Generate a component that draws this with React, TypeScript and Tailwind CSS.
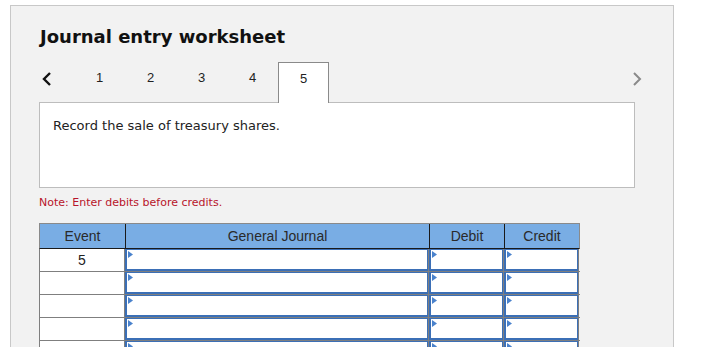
import React from "react";

const BLUE = "border-[#3b6fb6]";

function Tri() {
  return (
    <svg className="absolute left-[1px] top-[1px]" width="5" height="7" viewBox="0 0 5 7">
      <polygon points="0,0 5,3.5 0,7" fill="#4a82cc" />
    </svg>
  );
}

function InputCell({ w }: { w: string }) {
  return (
    <div className={`${w} h-full border-r border-[#7f7f7f] shrink-0`}>
      <div className={`relative h-[22px] border-t border-l-2 border-r border-b-2 ${BLUE} bg-white`}>
        <Tri />
      </div>
    </div>
  );
}

function Row({ ev }: { ev?: string }) {
  return (
    <div className="flex h-[23px] border-b border-[#7f7f7f]">
      <div className="w-[86px] shrink-0 border-l border-r border-[#7f7f7f] bg-white flex items-center justify-center text-[14px] text-[#222] font-['Liberation_Sans',Arial,sans-serif]">
        {ev}
      </div>
      <InputCell w="w-[304px]" />
      <InputCell w="w-[75px]" />
      <InputCell w="w-[75px]" />
    </div>
  );
}

export default function App() {
  const tabs = ["1", "2", "3", "4", "5"];
  return (
    <div className="w-[702px] h-[347px] overflow-hidden bg-white">
      <div className="ml-[10px] mt-[5px] w-[664px] h-[400px] border border-[#c8c8c8] bg-[#f2f2f2] pl-[28px] pt-[20px]">
        <div className="font-['DejaVu_Sans',Verdana,sans-serif] font-bold text-[18px] leading-[22px] text-[#111] pl-[1px]">
          Journal entry worksheet
        </div>
        <div className="mt-[14px] flex h-[40px] w-[608px] relative z-10">
          <div className="w-[35px] flex items-start pt-[9px]">
            <svg width="12" height="16" viewBox="0 0 12 16" className="ml-[2px]">
              <polyline points="9,2 3,8 9,14" fill="none" stroke="#111" strokeWidth="2.4" />
            </svg>
          </div>
          {tabs.map((t) => (
            <div
              key={t}
              className={`w-[51px] flex items-start justify-center pt-[8px] leading-[16px] text-[13px] text-[#222] font-['Liberation_Sans',Arial,sans-serif] ${
                t === "5" ? "bg-white border-t border-l border-r border-[#8a8a8a] h-[41px] pt-[7px]" : ""
              }`}
            >
              {t}
            </div>
          ))}
          <div className="flex-1" />
          <div className="w-[20px] flex items-start justify-center pt-[9px]">
            <svg width="10" height="16" viewBox="0 0 10 16">
              <polyline points="2,2 8,8 2,14" fill="none" stroke="#8a8a8a" strokeWidth="2" />
            </svg>
          </div>
        </div>
        <div className="w-[596px] h-[86px] border border-[#bdbdbd] bg-white pl-[13px] pt-[15px] font-['DejaVu_Sans',Verdana,sans-serif] text-[13px] leading-[16px] text-[#222]">
          Record the sale of treasury shares.
        </div>
        <div className="mt-[8px] font-['DejaVu_Sans',Verdana,sans-serif] text-[11px] leading-[14px] text-[#b8142a]">
          Note: Enter debits before credits.
        </div>
        <div className="mt-[13px] w-[541px]">
          <div className="flex h-[26px] border-t border-l border-r border-[#8a8a8a] border-b border-b-[#1a1a1a] bg-[#79ade4] font-['Liberation_Sans',Arial,sans-serif] text-[14px] text-[#2a2a2a]">
            <div className="w-[86px] shrink-0 border-r border-[#1a1a1a] flex items-center justify-center">Event</div>
            <div className="w-[304px] shrink-0 border-r border-[#1a1a1a] flex items-center justify-center">General Journal</div>
            <div className="w-[75px] shrink-0 border-r border-[#1a1a1a] flex items-center justify-center">Debit</div>
            <div className="flex-1 flex items-center justify-center">Credit</div>
          </div>
          <Row ev="5" />
          <Row />
          <Row />
          <Row />
          <Row />
        </div>
      </div>
    </div>
  );
}
